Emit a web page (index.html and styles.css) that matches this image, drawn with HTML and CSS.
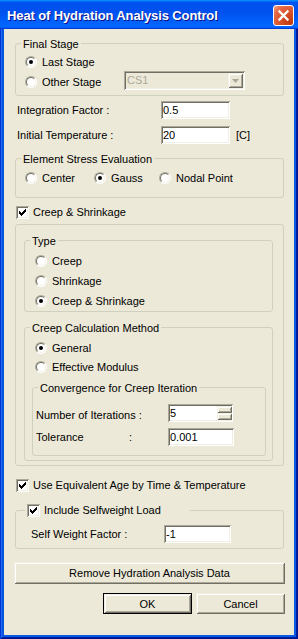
FILE: index.html
```html
<!DOCTYPE html>
<html lang="en">
<head>
<meta charset="utf-8">
<title>Heat of Hydration Analysis Control</title>
<link rel="stylesheet" href="styles.css">
</head>
<body>
<div class="window">
  <div class="titlebar">
    <span class="title">Heat of Hydration Analysis Control</span>
    <span class="close" aria-label="Close">
      <svg width="19" height="19" viewBox="0 0 19 19"><path d="M5.5 5.5 L13.5 13.5 M13.5 5.5 L5.5 13.5" stroke="#fff" stroke-width="2.3" stroke-linecap="square" fill="none"/></svg>
    </span>
  </div>
  <div class="frame">
    <div class="content">
      <div class="group final">
        <span class="legend">Final Stage</span>
        <div class="row"><span class="opt"><span class="radio on"></span>Last Stage</span></div>
        <div class="row">
          <span class="opt w-other"><span class="radio"></span>Other Stage</span>
          <span class="combo">
            <span class="combo-text">CS1</span>
            <span class="combo-btn"><svg width="7" height="4" viewBox="0 0 7 4"><path d="M0 0H7L3.5 4Z" fill="#ACA899"/></svg></span>
          </span>
        </div>
      </div>

      <div class="field-row f1"><span class="flabel w144">Integration Factor :</span><span class="edit w69">0.5</span></div>
      <div class="field-row f2"><span class="flabel w144">Initial Temperature :</span><span class="edit w69">20</span><span class="unit">[C]</span></div>

      <div class="group stress">
        <span class="legend">Element Stress Evaluation</span>
        <div class="row">
          <span class="opt w-center"><span class="radio"></span>Center</span>
          <span class="opt w-gauss"><span class="radio on"></span>Gauss</span>
          <span class="opt"><span class="radio"></span>Nodal Point</span>
        </div>
      </div>

      <div class="row check-row creep">
        <span class="opt"><span class="check"><svg width="7" height="7" viewBox="0 0 7 7" shape-rendering="crispEdges"><path d="M0 2h1v3h-1zM1 3h1v3h-1zM2 4h1v3h-1zM3 3h1v3h-1zM4 2h1v3h-1zM5 1h1v3h-1zM6 0h1v3h-1z" fill="#000"/></svg></span>Creep &amp; Shrinkage</span>
      </div>

      <div class="group outer">
        <div class="group type">
          <span class="legend">Type</span>
          <div class="row"><span class="opt"><span class="radio"></span>Creep</span></div>
          <div class="row"><span class="opt"><span class="radio"></span>Shrinkage</span></div>
          <div class="row"><span class="opt"><span class="radio on"></span>Creep &amp; Shrinkage</span></div>
        </div>
        <div class="group method">
          <span class="legend">Creep Calculation Method</span>
          <div class="row r19"><span class="opt"><span class="radio on"></span>General</span></div>
          <div class="row r19"><span class="opt"><span class="radio"></span>Effective Modulus</span></div>
          <div class="group conv">
            <span class="legend">Convergence for Creep Iteration</span>
            <div class="field-row">
              <span class="flabel w132 lower">Number of Iterations :</span>
              <span class="edit spin w65"><span class="spin-text">5</span><span class="spin-btns"><span class="sb"></span><span class="sb"></span></span></span>
            </div>
            <div class="field-row t2">
              <span class="flabel w93">Tolerance</span><span class="flabel w39">:</span><span class="edit w66">0.001</span>
            </div>
          </div>
        </div>
      </div>

      <div class="row check-row equiv">
        <span class="opt"><span class="check"><svg width="7" height="7" viewBox="0 0 7 7" shape-rendering="crispEdges"><path d="M0 2h1v3h-1zM1 3h1v3h-1zM2 4h1v3h-1zM3 3h1v3h-1zM4 2h1v3h-1zM5 1h1v3h-1zM6 0h1v3h-1z" fill="#000"/></svg></span>Use Equivalent Age by Time &amp; Temperature</span>
      </div>

      <div class="group self">
        <span class="legend check-legend"><span class="check"><svg width="7" height="7" viewBox="0 0 7 7" shape-rendering="crispEdges"><path d="M0 2h1v3h-1zM1 3h1v3h-1zM2 4h1v3h-1zM3 3h1v3h-1zM4 2h1v3h-1zM5 1h1v3h-1zM6 0h1v3h-1z" fill="#000"/></svg></span>Include Selfweight Load</span>
        <div class="field-row"><span class="flabel w133">Self Weight Factor :</span><span class="edit w67">-1</span></div>
      </div>

      <button class="btn wide">Remove Hydration Analysis Data</button>
      <div class="btn-row">
        <button class="btn default">OK</button>
        <button class="btn">Cancel</button>
      </div>
    </div>
  </div>
</div>
</body>
</html>
```

FILE: styles.css
```css
html, body {
  margin: 0;
  padding: 0;
}
body {
  font-family: "Liberation Sans", Arial, sans-serif;
  font-size: 11px;
  color: #000;
  background: #ECE9D8;
}
.window {
  width: 298px;
  height: 639px;
  display: flex;
  flex-direction: column;
  background: #ECE9D8;
  overflow: hidden;
}
.titlebar {
  flex: none;
  height: 29px;
  box-sizing: border-box;
  display: flex;
  align-items: center;
  padding: 0 4px 0 7px;
  background: linear-gradient(180deg, #0997ff, #0053ee 8%, #0050ee 40%, #0066ff 88%, #0066ff 93%, #005bff 95%, #003dd7 96%, #003dd7);
}
.title {
  font-weight: bold;
  font-size: 13px;
  letter-spacing: -0.12px;
  color: #fff;
  text-shadow: 1px 1px #0f1089;
  padding-top: 2px;
  white-space: nowrap;
}
.close {
  margin-left: auto;
  align-self: flex-start;
  margin-top: 5px;
  width: 21px;
  height: 21px;
  box-sizing: border-box;
  border: 1px solid #fff;
  border-radius: 3px;
  background: radial-gradient(circle at 85% 85%, #c23a10 0%, #d9522a 45%, #e46a45 75%, #f2a58a 100%);
  display: flex;
  align-items: center;
  justify-content: center;
}
.frame {
  flex: 1;
  padding: 0 4px 4px;
  background: #ECE9D8;
  box-shadow: inset 1px 0 #0831d9, inset -1px -1px #00138c, inset 2px 0 #166aee, inset -2px -2px #001ea0, inset 4px 0 #0855dd, inset -4px -4px #0a5ae6;
}
.content {
  padding: 0 10px 0 11px;
}

/* group boxes */
.group {
  position: relative;
  border: 1px solid #D0D0BF;
  border-radius: 3px;
}
.legend {
  position: absolute;
  top: -6px;
  left: 5px;
  padding: 0 2px;
  line-height: 13px;
  background: #ECE9D8;
  white-space: nowrap;
}

/* rows */
.row {
  display: flex;
  align-items: center;
  height: 20px;
}
.r19 { height: 19px; }
.opt {
  display: flex;
  align-items: center;
  white-space: nowrap;
}
.field-row {
  display: flex;
  align-items: center;
  height: 18px;
}
.flabel {
  flex: none;
  white-space: nowrap;
}
.lower { padding-top: 3px; }
.w144 { width: 144px; }
.w132 { width: 132px; }
.w133 { width: 133px; }
.w93 { width: 93px; }
.w39 { width: 39px; }
.w69 { width: 69px; }
.w67 { width: 67px; }
.w66 { width: 66px; }
.w65 { width: 65px; }

/* radio */
.radio {
  flex: none;
  position: relative;
  width: 12px;
  height: 12px;
  box-sizing: border-box;
  border-radius: 50%;
  border: 1px solid;
  border-color: #ACA899 #fff #fff #ACA899;
  background: #fff;
  margin-right: 5px;
}
.radio::before {
  content: "";
  position: absolute;
  inset: 0;
  border-radius: 50%;
  border: 1px solid;
  border-color: #716F64 #F1EFE2 #F1EFE2 #716F64;
}
.radio.on::after {
  content: "";
  position: absolute;
  left: 3px;
  top: 3px;
  width: 4px;
  height: 4px;
  border-radius: 50%;
  background: #000;
}

/* checkbox */
.check {
  flex: none;
  width: 13px;
  height: 13px;
  box-sizing: border-box;
  background: #fff;
  box-shadow: inset 1px 1px #ACA899, inset -1px -1px #fff, inset 2px 2px #716F64, inset -2px -2px #F1EFE2;
  display: flex;
  align-items: center;
  justify-content: center;
  margin-right: 4px;
}

/* edit boxes */
.edit {
  flex: none;
  box-sizing: border-box;
  height: 18px;
  padding: 0 2px;
  display: flex;
  align-items: center;
  background: #fff;
  box-shadow: inset 1px 1px #ACA899, inset -1px -1px #fff, inset 2px 2px #716F64, inset -2px -2px #F1EFE2;
  line-height: 14px;
}
.unit { margin-left: 6px; }
.spin {
  padding: 2px 1px 2px 2px;
  align-items: stretch;
}
.spin-text {
  flex: 1;
  display: flex;
  align-items: center;
}
.spin-btns {
  width: 15px;
  display: flex;
  flex-direction: column;
}
.sb {
  flex: 1;
  background: #ECE9D8;
  box-shadow: inset 1px 1px #F1EFE2, inset -1px -1px #716F64, inset 2px 2px #fff, inset -2px -2px #ACA899;
}

/* combo */
.combo {
  align-self: flex-start;
  margin-top: -1px;
  width: 121px;
  height: 19px;
  box-sizing: border-box;
  padding: 2px;
  display: flex;
  background: #ECE9D8;
  box-shadow: inset 1px 1px #ACA899, inset -1px -1px #fff, inset 2px 2px #716F64, inset -2px -2px #F1EFE2;
}
.combo-text {
  flex: 1;
  color: #ACA899;
  line-height: 15px;
  padding-left: 1px;
}
.combo-btn {
  width: 15px;
  height: 15px;
  display: flex;
  align-items: center;
  justify-content: center;
  background: #ECE9D8;
  box-shadow: inset 1px 1px #F1EFE2, inset -1px -1px #716F64, inset 2px 2px #fff, inset -2px -2px #ACA899;
}

/* specific blocks */
.final {
  margin-top: 14px;
  padding: 8px 0 3px 9px;
}
.w-other { width: 99px; }
.f1 { margin-top: 5px; padding-left: 2px; }
.f2 { margin-top: 7px; padding-left: 2px; }
.stress {
  margin-top: 14px;
  padding: 9px 0 9px 9px;
}
.w-center { width: 69px; }
.w-gauss { width: 65px; }
.check-row { padding-left: 1px; }
.creep { margin-top: 4px; }
.outer {
  margin-top: 2px;
  padding: 15px 10px 4px 8px;
}
.type {
  padding: 10px 0 0 10px;
}
.method {
  margin-top: 15px;
  padding: 10px 6px 4px 7px;
}
.method > .row { padding-left: 3px; }
.conv {
  margin-top: 11px;
  padding: 16px 0 9px 3px;
}
.t2 { margin-top: 6px; }
.equiv { margin-top: 9px; }
.self {
  margin-top: 15px;
  padding: 14px 0 5px 15px;
}
.check-legend {
  top: -7px;
  left: 9px;
  width: 165px;
  box-sizing: border-box;
  padding: 0 0 0 2px;
  display: flex;
  align-items: center;
}

/* buttons */
.btn {
  font: inherit;
  color: #000;
  background: #ECE9D8;
  border: 0;
  padding: 0;
  margin: 0;
  box-sizing: border-box;
  box-shadow: inset 1px 1px #F1EFE2, inset -1px -1px #716F64, inset 2px 2px #fff, inset -2px -2px #ACA899;
}
.wide {
  display: block;
  width: 271px;
  height: 22px;
  margin: 13px -1px 0;
}
.btn-row {
  display: flex;
  justify-content: flex-end;
  gap: 4px;
  margin: 9px -1px 0 0;
}
.btn-row .btn {
  width: 89px;
  height: 21px;
}
.btn.default {
  border: 1px solid #000;
}
```
